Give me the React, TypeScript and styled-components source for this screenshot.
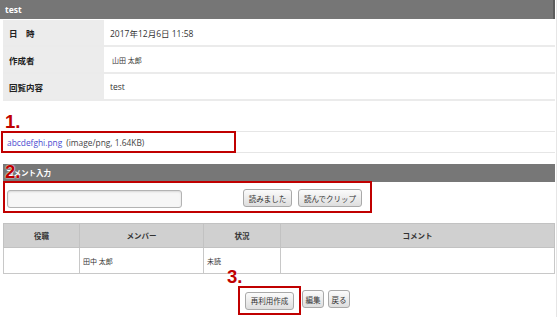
import React from "react";
import styled, { createGlobalStyle } from "styled-components";

const GlobalStyle = createGlobalStyle`
  *, *::before, *::after { box-sizing: border-box; }
  html, body { margin: 0; padding: 0; background: #fff; }
  body {
    font-family: "Open Sans", "Noto Sans CJK JP", sans-serif;
    color: #333;
  }
`;

const RED = "#c00000";

const Page = styled.div`
  width: 557px;
  height: 317px;
  border-right: 1px solid #e6e6e6;
  overflow: hidden;
`;

const PanelHeader = styled.div`
  width: 555px;
  height: 19px;
  background: #767676;
  border-right: 2px solid #5c5c5c;
  color: #fff;
  font-weight: 700;
  font-size: 8.5px;
  line-height: 19px;
  padding-left: 5px;
`;

const InfoList = styled.div`
  margin: 1px 0 0 3px;
  width: 552px;
`;

const InfoRow = styled.div`
  display: grid;
  grid-template-columns: 101px 1fr;
  height: 27px;
  border-bottom: 2px solid #ebebeb;
`;

const InfoLabel = styled.div`
  background: #ececec;
  display: flex;
  align-items: center;
  padding-left: 6px;
  font-weight: 700;
  font-size: 8.5px;
  color: #222;
`;

const InfoValue = styled.div<{ $small?: boolean }>`
  display: flex;
  align-items: center;
  padding-left: ${(p) => (p.$small ? "8px" : "6px")};
  font-size: ${(p) => (p.$small ? "7px" : "8.5px")};
  color: #333;
`;

const Marker = styled.div`
  font-family: "Liberation Sans", Arial, sans-serif;
  font-weight: 700;
  font-size: 18.5px;
  line-height: 18px;
  color: ${RED};
  text-shadow: 0 0 2px #fff, 0 0 1px #fff;
`;

const BlockMarker = styled(Marker)`
  padding: 12px 0 0 5px;
  height: 30px;
`;

const OverlayMarker = styled(Marker)<{ $top: number; $left: number }>`
  position: absolute;
  top: ${(p) => p.$top}px;
  left: ${(p) => p.$left}px;
  z-index: 2;
`;

const AttachRow = styled.div`
  margin-left: 3px;
  width: 552px;
  height: 22px;
  display: flex;
  border-top: 1px solid #e6e6e6;
  border-bottom: 1px solid #e6e6e6;
`;

const AttachBox = styled.div`
  margin: -1px 0 -1px -2px;
  width: 235px;
  height: 22px;
  border: 2px solid ${RED};
  display: flex;
  align-items: center;
  padding-left: 4px;
  font-size: 8.4px;
  gap: 4px;
`;

const FileLink = styled.a`
  color: #4b4bd0;
  text-decoration: none;
`;

const FileMeta = styled.span`
  color: #444;
`;

const CommentSection = styled.div`
  position: relative;
  margin-top: 11px;
`;

const SectionBar = styled.div`
  margin-left: 3px;
  width: 552px;
  height: 18px;
  background: #777;
  color: #fff;
  font-weight: 700;
  font-size: 7.5px;
  line-height: 18px;
  padding-left: 3px;
`;

const CommentBox = styled.div`
  margin: -1px 0 0 3px;
  width: 369px;
  height: 32px;
  border: 2px solid ${RED};
  display: flex;
  align-items: flex-start;
  padding: 6px 0 0 2px;
`;

const CommentInput = styled.input`
  margin-top: 1px;
  width: 175px;
  height: 18px;
  border: 1px solid #b3b3b3;
  border-radius: 3px;
  background: #f6f6f6;
  box-shadow: inset 0 1px 2px rgba(0, 0, 0, 0.12);
  outline: none;
`;

const ButtonGroup = styled.div<{ $offset?: number }>`
  display: flex;
  gap: 6px;
  margin-left: ${(p) => p.$offset ?? 0}px;
`;

const Button = styled.button<{ $w: number }>`
  width: ${(p) => p.$w}px;
  height: 18px;
  padding: 0;
  border: 1px solid #a9a9a9;
  border-radius: 3px;
  background: linear-gradient(#fbfbfb, #dedede);
  font-family: "Noto Sans CJK JP", sans-serif;
  font-size: 7.5px;
  color: #333;
  display: flex;
  align-items: center;
  justify-content: center;
`;

const MemberTable = styled.table`
  margin: 10px 0 0 3px;
  width: 552px;
  border-collapse: collapse;
  table-layout: fixed;
`;

const HeadCell = styled.th<{ $w?: number }>`
  width: ${(p) => (p.$w ? `${p.$w}px` : "auto")};
  height: 24px;
  background: #d0d0d0;
  border: 1px solid #c2c2c2;
  font-size: 7.5px;
  font-weight: 700;
  color: #333;
  text-align: center;
  padding: 0;
`;

const BodyCell = styled.td`
  height: 26px;
  border: 1px solid #c8c8c8;
  font-size: 7px;
  color: #333;
  padding: 0 0 0 3px;
`;

const ActionRow = styled.div`
  display: flex;
  align-items: flex-start;
  margin-top: 12px;
  padding-left: 238px;
`;

const ActionBox = styled.div`
  position: relative;
  width: 63px;
  height: 29px;
  border: 2px solid ${RED};
  display: flex;
  align-items: center;
  padding-left: 5px;
`;

const SideButtons = styled(ButtonGroup)`
  gap: 4px;
  margin-top: 4px;
  margin-left: 1px;
`;

export default function App() {
  return (
    <Page>
      <GlobalStyle />
      <PanelHeader>test</PanelHeader>
      <InfoList>
        <InfoRow>
          <InfoLabel>日　時</InfoLabel>
          <InfoValue>2017年12月6日 11:58</InfoValue>
        </InfoRow>
        <InfoRow>
          <InfoLabel>作成者</InfoLabel>
          <InfoValue $small>山田 太郎</InfoValue>
        </InfoRow>
        <InfoRow>
          <InfoLabel>回覧内容</InfoLabel>
          <InfoValue>test</InfoValue>
        </InfoRow>
      </InfoList>

      <BlockMarker>1.</BlockMarker>
      <AttachRow>
        <AttachBox>
          <FileLink href="#">abcdefghi.png</FileLink>
          <FileMeta>(image/png, 1.64KB)</FileMeta>
        </AttachBox>
      </AttachRow>

      <CommentSection>
        <OverlayMarker $top={-1} $left={5}>2.</OverlayMarker>
        <SectionBar>コメント入力</SectionBar>
        <CommentBox>
          <CommentInput type="text" />
          <ButtonGroup $offset={61}>
            <Button $w={49}>読みました</Button>
            <Button $w={64}>読んでクリップ</Button>
          </ButtonGroup>
        </CommentBox>
      </CommentSection>

      <MemberTable>
        <thead>
          <tr>
            <HeadCell $w={76}>役職</HeadCell>
            <HeadCell $w={124}>メンバー</HeadCell>
            <HeadCell $w={77}>状況</HeadCell>
            <HeadCell>コメント</HeadCell>
          </tr>
        </thead>
        <tbody>
          <tr>
            <BodyCell></BodyCell>
            <BodyCell>田中 太郎</BodyCell>
            <BodyCell>未読</BodyCell>
            <BodyCell></BodyCell>
          </tr>
        </tbody>
      </MemberTable>

      <ActionRow>
        <ActionBox>
          <OverlayMarker $top={-20} $left={-13}>3.</OverlayMarker>
          <Button $w={49}>再利用作成</Button>
        </ActionBox>
        <SideButtons>
          <Button $w={22}>編集</Button>
          <Button $w={22}>戻る</Button>
        </SideButtons>
      </ActionRow>
    </Page>
  );
}
